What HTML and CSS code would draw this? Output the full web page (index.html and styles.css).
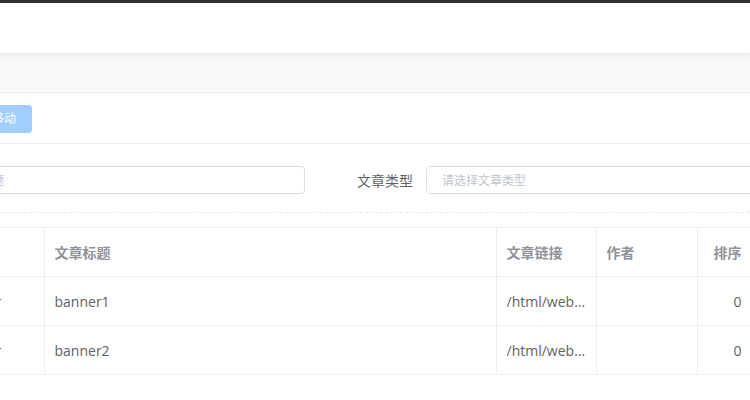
FILE: index.html
```html
<!DOCTYPE html>
<html lang="zh-CN">
<head>
<meta charset="utf-8">
<title>文章管理</title>
<link rel="stylesheet" href="styles.css">
</head>
<body>
<div class="topbar"></div>
<header class="header"></header>
<div class="tabs"></div>
<main class="main">
  <div class="toolbar">
    <button class="btn btn-primary is-disabled">移动</button>
  </div>
  <form class="search">
    <div class="form-item first">
      <input class="input input-title" placeholder="请输入文章标题">
    </div>
    <div class="form-item">
      <label class="label">文章类型</label>
      <input class="input input-type" placeholder="请选择文章类型">
    </div>
  </form>
  <table class="table">
    <colgroup>
      <col class="c1"><col class="c2"><col class="c3"><col class="c4"><col class="c5">
    </colgroup>
    <thead>
      <tr><th>类型</th><th>文章标题</th><th>文章链接</th><th>作者</th><th class="right">排序</th></tr>
    </thead>
    <tbody>
      <tr><td>banner</td><td>banner1</td><td><span class="ellip">/html/web/banner1.html</span></td><td></td><td class="right">0</td></tr>
      <tr><td>banner</td><td>banner2</td><td><span class="ellip">/html/web/banner2.html</span></td><td></td><td class="right">0</td></tr>
    </tbody>
  </table>
</main>
</body>
</html>
```

FILE: styles.css
```css
html, body {
  margin: 0;
  padding: 0;
  background: #fff;
  overflow: hidden;
  width: 750px;
  height: 400px;
  font-family: "Open Sans", "Noto Sans CJK SC", sans-serif;
}

.topbar {
  height: 3px;
  background: #333;
}

.header {
  height: 50px;
  background: #fff;
  position: relative;
  z-index: 1;
  box-shadow: 0 2px 5px rgba(0, 0, 0, 0.07);
}

.tabs {
  height: 38px;
  background: #f8f8f8;
  border-bottom: 1px solid #fff;
  box-shadow: 0 1px 0 #e6e6e6;
  margin-bottom: 1px;
}

.main {
  margin-left: -56px;
  width: 900px;
}

.toolbar {
  padding: 12px 0 10px 32px;
  border-bottom: 1px solid #eeeeee;
  display: flex;
}

.btn {
  height: 28px;
  padding: 0 15px;
  font-size: 12px;
  font-family: inherit;
  border-radius: 3px;
  border: 1px solid #a0cfff;
  line-height: 26px;
}

.btn-primary.is-disabled {
  background: #a0cfff;
  color: #fff;
}

.search {
  display: flex;
  align-items: center;
  padding: 22px 0 18px;
  border-bottom: 1px dashed #e8e8e8;
  margin: 0;
}

.form-item {
  display: flex;
  align-items: center;
  flex: none;
}

.form-item.first {
  margin-left: -40px;
  margin-right: 52px;
}

.label {
  font-size: 14px;
  color: #606266;
  padding-right: 13px;
}

.input {
  height: 28px;
  box-sizing: border-box;
  border: 1px solid #dcdfe6;
  border-radius: 4px;
  padding: 0 15px;
  font-size: 12px;
  font-family: inherit;
  color: #606266;
  outline: none;
}

.input::placeholder {
  color: #c0c4cc;
}

.input-title {
  width: 401px;
}

.input-type {
  width: 400px;
}

.table {
  margin-top: 14px;
  border-collapse: collapse;
  table-layout: fixed;
  width: 808px;
  font-size: 14px;
  color: #606266;
}

.c1 { width: 100px; }
.c2 { width: 452px; }
.c3 { width: 100px; }
.c4 { width: 101px; }
.c5 { width: 55px; }

.table th,
.table td {
  height: 48px;
  padding: 0 10px;
  border-bottom: 1px solid #ebeef5;
  border-right: 1px solid #ebeef5;
  text-align: left;
  white-space: nowrap;
  overflow: hidden;
}

.table thead tr {
  border-top: 1px solid #ebeef5;
}

.table th {
  color: #909399;
  font-weight: bold;
}

.table .right {
  text-align: right;
}

.ellip {
  display: block;
  overflow: hidden;
  text-overflow: ellipsis;
  white-space: nowrap;
}
```
